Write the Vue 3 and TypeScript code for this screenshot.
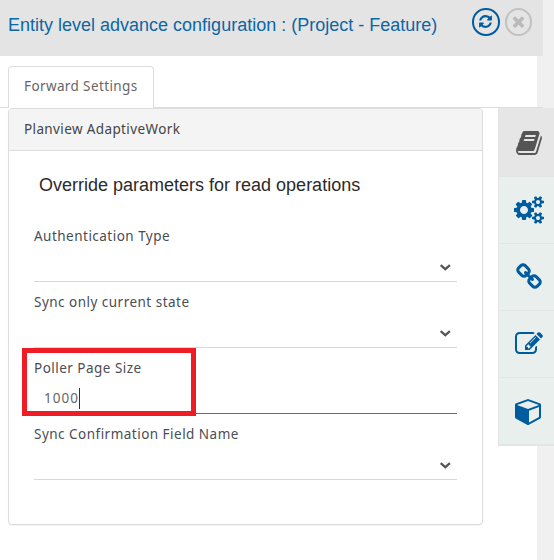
<script setup lang="ts">
interface Field {
  label: string
  value?: string
}

interface Tool {
  name: string
  path: string
}

const fields: Field[] = [
  { label: 'Authentication Type' },
  { label: 'Sync only current state' },
  { label: 'Poller Page Size', value: '1000' },
  { label: 'Sync Confirmation Field Name' },
]

const smallGear =
  'v140q0 16-149 31-12 27-30 52 51 113 51 138 0 4-4 7-122 71-124 71-8 0-46-47t-52-68q-20 2-30 2t-30-2q-14 21-52 68t-46 47q-2 0-124-71-4-3-4-7 0-25 51-138-18-25-30-52-149-15-149-31v-140q0-16 149-31 13-29 30-52-51-113-51-138 0-4 4-7 4-2 35-20t59-34 30-16q8 0 46 46.5t52 67.5q20-2 30-2t30 2q51-71 92-112l6-2q4 0 124 70 4 3 4 7 0 25-51 138 17 23 30 52 149 15 149 31z'

const tools: Tool[] = [
  {
    name: 'book',
    path: 'M1703 478q40 57 18 129l-275 906q-19 64-76.5 107.5t-122.5 43.5h-923q-77 0-148.5-53.5t-99.5-131.5q-24-67-2-127 0-4 3-27t4-37q1-8-3-21.5t-3-19.5q2-11 8-21t16.5-23.5 16.5-23.5q23-38 45-91.5t30-91.5q3-10 .5-30t-.5-28q3-11 17-28t17-23q21-36 42-92t25-90q1-9-2.5-32t.5-28q4-13 22-30.5t22-22.5q19-26 42.5-84.5t27.5-96.5q1-8-3-25.5t-2-26.5q2-8 9-18t18-23 17-21q8-12 16.5-30.5t15-35 16-36 19.5-32 26.5-23.5 36-11.5 47.5 5.5l-1 3q38-9 51-9h761q74 0 114 56t18 130l-274 906q-36 119-71.5 153.5t-128.5 34.5h-869q-27 0-38 15-11 16-1 43 24 70 144 70h923q29 0 56-15.5t35-41.5l300-987q7-22 5-57 38 15 59 43zm-1064 2q-4 13 2 22.5t20 9.5h608q13 0 25.5-9.5t16.5-22.5l21-64q4-13-2-22.5t-20-9.5h-608q-13 0-25.5 9.5t-16.5 22.5zm-83 256q-4 13 2 22.5t20 9.5h608q13 0 25.5-9.5t16.5-22.5l21-64q4-13-2-22.5t-20-9.5h-608q-13 0-25.5 9.5t-16.5 22.5z',
  },
  {
    name: 'cogs',
    path:
      'M832 896q0-106-75-181t-181-75-181 75-75 181 75 181 181 75 181-75 75-181zm768 512q0-52-38-90t-90-38-90 38-38 90q0 53 37.5 90.5t90.5 37.5 90.5-37.5 37.5-90.5zm0-1024q0-52-38-90t-90-38-90 38-38 90q0 53 37.5 90.5t90.5 37.5 90.5-37.5 37.5-90.5zm-384 421v185q0 10-7 19.5t-16 10.5l-155 24q-11 35-32 76 34 48 90 115 7 11 7 20 0 12-7 19-23 30-82.5 89.5t-78.5 59.5q-11 0-21-7l-115-90q-37 19-77 31-11 108-23 155-7 24-30 24h-186q-11 0-20-7.5t-10-17.5l-23-153q-34-10-75-31l-118 89q-7 7-20 7-11 0-21-8-144-133-144-160 0-9 7-19 10-14 41-53t47-61q-23-44-35-82l-152-24q-10-1-17-9.5t-7-19.5v-185q0-10 7-19.5t16-10.5l155-24q11-35 32-76-34-48-90-115-7-11-7-20 0-12 7-20 22-30 82-89t79-59q11 0 21 7l115 90q34-18 77-32 11-108 23-154 7-24 30-24h186q11 0 20 7.5t10 17.5l23 153q34 10 75 31l118-89q8-7 20-7 11 0 21 8 144 133 144 160 0 8-7 19-12 16-42 54t-45 60q23 48 34 82l152 23q10 2 17 10.5t7 19.5z' +
      'M1856 1338' + smallGear + 'M1856 314' + smallGear,
  },
  {
    name: 'link',
    path: 'M1520 1216q0-40-28-68l-208-208q-28-28-68-28-42 0-72 32 3 3 19 18.5t21.5 21.5 15 19 13 25.5 3.5 27.5q0 40-28 68t-68 28q-15 0-27.5-3.5t-25.5-13-19-15-21.5-21.5-18.5-19q-33 31-33 73 0 40 28 68l206 207q27 27 68 27 40 0 68-26l147-146q28-28 28-67zm-703-705q0-40-28-68l-206-207q-28-28-68-28-39 0-68 27l-147 146q-28 28-28 67 0 40 28 68l208 208q27 27 68 27 42 0 72-31-3-3-19-18.5t-21.5-21.5-15-19-13-25.5-3.5-27.5q0-40 28-68t68-28q15 0 27.5 3.5t25.5 13 19 15 21.5 21.5 18.5 19q33-31 33-73zm895 705q0 120-85 203l-147 146q-83 83-203 83-121 0-204-85l-206-207q-83-83-83-203 0-123 88-209l-88-88q-86 88-208 88-120 0-204-84l-208-208q-84-84-84-204t85-203l147-146q83-83 203-83 121 0 204 85l206 207q83 83 83 203 0 123-88 209l88 88q86-88 208-88 120 0 204 84l208 208q84 84 84 204z',
  },
  {
    name: 'edit',
    path: 'M888 1184l116-116-152-152-116 116v56h96v96h56zm440-720q-16-16-33 1l-350 350q-17 17-1 33t33-1l350-350q17-17 1-33zm80 594v190q0 119-84.5 203.5t-203.5 84.5h-832q-119 0-203.5-84.5t-84.5-203.5v-832q0-119 84.5-203.5t203.5-84.5h832q63 0 117 25 15 7 18 23 3 17-9 29l-49 49q-14 14-32 8-23-6-45-6h-832q-66 0-113 47t-47 113v832q0 66 47 113t113 47h832q66 0 113-47t47-113v-126q0-13 9-22l64-64q15-15 35-7t20 29zm-96-738l288 288-672 672h-288v-288zm444 132l-92 92-288-288 92-92q28-28 68-28t68 28l152 152q28 28 28 68t-28 68z',
  },
  {
    name: 'cube',
    path: 'M896 1629l640-349v-636l-640 233v752zm-64-865l698-254-698-254-698 254zm832-252v768q0 35-18 65t-49 47l-704 384q-28 16-61 16t-61-16l-704-384q-31-17-49-47t-18-65v-768q0-40 23-73t61-47l704-256q22-8 44-8t44 8l704 256q38 14 61 47t23 73z',
  },
]
</script>

<template>
  <div class="page">
    <header class="header">
      <h1 class="title">Entity level advance configuration : (Project - Feature)</h1>
      <button class="round refresh" aria-label="Refresh">
        <svg viewBox="0 0 1792 1792">
          <path d="M1639 1056q0 5-1 7-64 268-268 434.5t-478 166.5q-146 0-282.5-55t-243.5-157l-129 129q-19 19-45 19t-45-19-19-45v-448q0-26 19-45t45-19h448q26 0 45 19t19 45-19 45l-137 137q71 66 161 102t187 36q134 0 250-65t186-179q11-17 53-117 8-23 30-23h192q13 0 22.5 9.5t9.5 22.5zm25-800v448q0 26-19 45t-45 19h-448q-26 0-45-19t-19-45 19-45l138-138q-148-137-349-137-134 0-250 65t-186 179q-11 17-53 117-8 23-30 23h-199q-13 0-22.5-9.5t-9.5-22.5v-7q65-268 270-434.5t480-166.5q146 0 284 55.5t245 156.5l130-129q19-19 45-19t45 19 19 45z" />
        </svg>
      </button>
      <button class="round close" aria-label="Close">
        <svg viewBox="0 0 1792 1792">
          <path d="M1490 1322q0 40-28 68l-136 136q-28 28-68 28t-68-28l-294-294-294 294q-28 28-68 28t-68-28l-136-136q-28-28-28-68t28-68l294-294-294-294q-28-28-28-68t28-68l136-136q28-28 68-28t68 28l294 294 294-294q28-28 68-28t68 28l136 136q28 28 28 68t-28 68l-294 294 294 294q28 28 28 68z" />
        </svg>
      </button>
    </header>

    <div class="tabs-row">
      <nav class="tabs">
        <span class="tab">Forward Settings</span>
      </nav>
    </div>

    <div class="content">
      <main class="main">
        <section class="card">
          <div class="card-head">Planview AdaptiveWork</div>
          <div class="card-body">
            <h2 class="subtitle">Override parameters for read operations</h2>
            <div
              v-for="field in fields"
              :key="field.label"
              class="field"
              :class="{ active: field.value }"
            >
              <label class="label">{{ field.label }}</label>
              <div v-if="field.value" class="value">
                <span>{{ field.value }}</span><i class="caret"></i>
              </div>
              <svg v-else class="chevron" viewBox="0 0 12 8">
                <path d="M1.7 1.2 L6.3 5.2 L10.9 1.2" />
              </svg>
              <div v-if="field.value" class="highlight"></div>
            </div>
          </div>
        </section>
      </main>
      <aside class="rail">
        <div
          v-for="(tool, index) in tools"
          :key="tool.name"
          class="tool"
          :class="{ selected: index === 0 }"
        >
          <svg viewBox="0 0 1792 1792"><path :d="tool.path" /></svg>
        </div>
      </aside>
    </div>
  </div>
</template>

<style>
body {
  margin: 0;
  background: #f0f0f0;
}
</style>

<style scoped>
.page {
  box-sizing: border-box;
  width: 554px;
  height: 560px;
  overflow: hidden;
  display: flex;
  flex-direction: column;
  background: linear-gradient(to right, #fff 537px, #f0f0f0 537px);
  font-family: "Noto Sans", sans-serif;
  font-size: 13.5px;
  letter-spacing: 0.38px;
  color: #4a4d55;
}

.header {
  box-sizing: border-box;
  width: 543px;
  height: 56px;
  padding: 8px 11px 0 8px;
  display: flex;
  align-items: flex-start;
  background: #e4e4e4;
  box-shadow: 11px 0 0 #f0f0f0;
}

.title {
  flex: 1;
  margin: 6px 0 0;
  font: 400 18px/22px "Liberation Sans", Arial, sans-serif;
  letter-spacing: 0;
  white-space: nowrap;
  color: #0d66a5;
}

.round {
  box-sizing: border-box;
  width: 27.5px;
  height: 27.5px;
  margin: 0 0 0 5px;
  padding: 0;
  display: flex;
  align-items: center;
  justify-content: center;
  border: 2px solid #005b9f;
  border-radius: 50%;
  background: transparent;
}

.round svg {
  width: 15px;
  height: 15px;
  fill: #005b9f;
}

.round.close {
  border-color: #c1c1c1;
}

.round.close svg {
  width: 17px;
  height: 17px;
  fill: #bababa;
}

.tabs-row {
  box-sizing: border-box;
  width: 543px;
  height: 52px;
  padding: 10px 0 0 8px;
  border-bottom: 1px solid #dcdcdc;
}

.tabs {
  display: flex;
}

.tab {
  box-sizing: border-box;
  width: 146px;
  height: 42px;
  padding-left: 15px;
  border: 1px solid #dcdcdc;
  border-bottom: 0;
  border-radius: 4px 4px 0 0;
  background: #fff;
  line-height: 38px;
  color: #666;
  white-space: nowrap;
}

.content {
  display: flex;
  justify-content: space-between;
  align-items: flex-start;
}

.main {
  padding-left: 8px;
}

.card {
  box-sizing: border-box;
  width: 475px;
  height: 417px;
  border: 1px solid #dcdcdc;
  border-radius: 4px;
  background: #fff;
  box-shadow: 0 1px 1px rgba(0, 0, 0, 0.05);
}

.card-head {
  height: 41px;
  padding-left: 15px;
  border-bottom: 1px solid #dcdcdc;
  border-radius: 3px 3px 0 0;
  background: #f4f4f4;
  line-height: 40px;
  color: #444;
}

.card-body {
  padding: 23px 25px 0;
}

.subtitle {
  margin: 0 0 20px;
  padding-left: 5px;
  font: 400 18px/22px "Liberation Sans", Arial, sans-serif;
  letter-spacing: 0;
  color: #2b2b2b;
}

.field {
  position: relative;
  box-sizing: border-box;
  height: 66px;
  display: flex;
  flex-direction: column;
  border-bottom: 1px solid #d8d8d8;
}

.field.active {
  border-color: #d43f3a;
}

.label {
  height: 40px;
  line-height: 41px;
  letter-spacing: 0.48px;
}

.chevron {
  width: 12px;
  height: 8px;
  margin: 8px 6px 0 auto;
  fill: none;
  stroke: #555;
  stroke-width: 2.2;
}

.value {
  display: flex;
  align-items: center;
  height: 20px;
  padding-left: 10px;
  letter-spacing: 1px;
  color: #666;
}

.caret {
  width: 1px;
  height: 21px;
  background: #333;
}

/* Callout frame laid over the focused field */
.highlight {
  position: absolute;
  left: -12px;
  top: 0;
  box-sizing: border-box;
  width: 174px;
  height: 68px;
  border: 5px solid #ee1c25;
}

.rail {
  box-sizing: border-box;
  width: 56px;
  border-left: 1px solid #e4e4e4;
  border-bottom: 1px solid #e4e4e4;
  background: #e9efed;
}

.tool {
  box-sizing: border-box;
  height: 67px;
  padding-left: 16px;
  display: flex;
  align-items: center;
  border-bottom: 1px solid #e3e5e4;
}

.tool.selected {
  height: 69px;
  padding-top: 2px;
  background: #e6e6e6;
}

.tool svg {
  width: 28px;
  height: 28px;
  overflow: visible;
  fill: #005b9f;
}

.tool.selected svg {
  fill: #555;
}
</style>
